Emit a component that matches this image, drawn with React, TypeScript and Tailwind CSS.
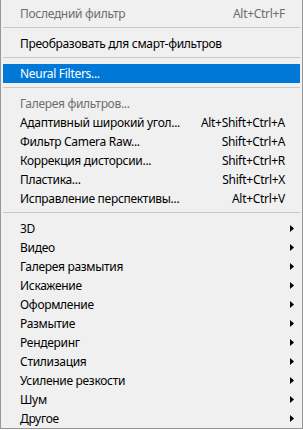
import React from "react";

type Item =
  | { type: "sep" }
  | { type: "item"; label: string; shortcut?: string; disabled?: boolean; active?: boolean; sub?: boolean };

const items: Item[] = [
  { type: "item", label: "Последний фильтр", shortcut: "Alt+Ctrl+F", disabled: true },
  { type: "sep" },
  { type: "item", label: "Преобразовать для смарт-фильтров" },
  { type: "sep" },
  { type: "item", label: "Neural Filters...", active: true },
  { type: "sep" },
  { type: "item", label: "Галерея фильтров...", disabled: true },
  { type: "item", label: "Адаптивный широкий угол...", shortcut: "Alt+Shift+Ctrl+A" },
  { type: "item", label: "Фильтр Camera Raw...", shortcut: "Shift+Ctrl+A" },
  { type: "item", label: "Коррекция дисторсии...", shortcut: "Shift+Ctrl+R" },
  { type: "item", label: "Пластика...", shortcut: "Shift+Ctrl+X" },
  { type: "item", label: "Исправление перспективы...", shortcut: "Alt+Ctrl+V" },
  { type: "sep" },
  { type: "item", label: "3D", sub: true },
  { type: "item", label: "Видео", sub: true },
  { type: "item", label: "Галерея размытия", sub: true },
  { type: "item", label: "Искажение", sub: true },
  { type: "item", label: "Оформление", sub: true },
  { type: "item", label: "Размытие", sub: true },
  { type: "item", label: "Рендеринг", sub: true },
  { type: "item", label: "Стилизация", sub: true },
  { type: "item", label: "Усиление резкости", sub: true },
  { type: "item", label: "Шум", sub: true },
  { type: "item", label: "Другое", sub: true },
];

export default function App() {
  return (
    <div
      className="w-[303px] h-[429px] bg-[#f0f0f0] border-l border-r border-b border-[#979797] pt-[4px] overflow-hidden text-[12px] leading-none tracking-[-0.3px]"
      style={{ fontFamily: '"Noto Sans", "Open Sans", sans-serif' }}
    >
      {items.map((it, i) =>
        it.type === "sep" ? (
          <div key={i} className="mx-[2px] pt-[4px] pb-[6px]">
            <div className="h-px bg-[#c9c9c9]" />
          </div>
        ) : (
          <div
            key={i}
            className={
              "mx-[2px] h-[19px] flex items-center pl-[17px] pr-[15px] relative " +
              (it.active ? "bg-[#0078d7] text-white" : it.disabled ? "text-[#6d6d6d]" : "text-black")
            }
          >
            <span className="flex-1 whitespace-nowrap">{it.label}</span>
            {it.shortcut && <span className="whitespace-nowrap">{it.shortcut}</span>}
            {it.sub && (
              <svg className="absolute right-[6px] top-[6px]" width="4" height="7" viewBox="0 0 4 7">
                <path d="M0 0 L4 3.5 L0 7 Z" fill="#000" />
              </svg>
            )}
          </div>
        )
      )}
    </div>
  );
}
